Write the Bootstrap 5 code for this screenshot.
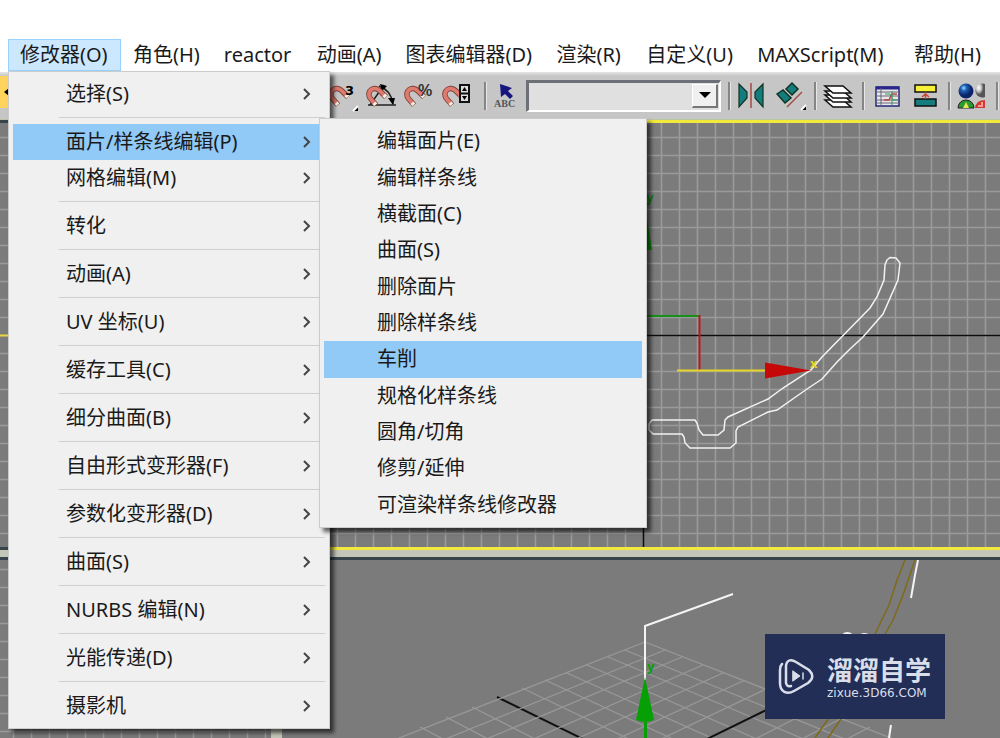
<!DOCTYPE html>
<html lang="zh-CN">
<head>
<meta charset="utf-8">
<meta name="viewport" content="width=device-width, initial-scale=1">
<title>修改器</title>
<link href="https://cdn.jsdelivr.net/npm/bootstrap@5.3.0/dist/css/bootstrap.min.css" rel="stylesheet">
<style>
  body { font-family: "Noto Sans", "Noto Sans CJK SC", sans-serif; font-size: 20px; line-height: 30px; color: #1a1a1a; background: #fff; }
  .app { min-height: 100vh; overflow: hidden; }
  .menubar { padding: 39px 7px 1px 8px; z-index: 10; }
  .menubar > .nav { display: grid; grid-template-columns: 113fr 91fr 93fr 88fr 151fr 90fr 111fr 157fr 91fr; }
  .menubar .nav-link { padding: 0 11px; line-height: 30px; color: #1a1a1a; border: 1px solid transparent; white-space: nowrap; }
  .menubar .nav-link.show { background: #cce8ff; border-color: #99d1ff; }

  .menu { border: 1px solid #ccc; border-radius: 0; background: #f0f0f0; box-shadow: 4px 4px 4px rgba(0,0,0,.6); padding: 4px; margin: 0; font-size: 20px; color: #1a1a1a; }
  .menu-main { width: 322px; top: 100%; left: 0; }
  .menu-sub { width: 328px; height: 410px; top: -6px; left: 306px; }
  .menu .dropdown-item { height: 36px; line-height: 36px; padding: 0 8px 0 53px; color: #1a1a1a; display: flex; align-items: center; justify-content: space-between; }
  .menu-main > li > .dropdown-item { width: 307px; }
  .menu-sub .dropdown-item { height: 100%; }
  .menu .dropdown-item.active { background: #91c9f7; }
  .menu .dropdown-divider { margin: 5px 0 6px 46px; border-top: 1px solid #d0d0d0; opacity: 1; }
  .chev { width: 10px; height: 14px; fill: none; stroke: #444; stroke-width: 2; }

  .toolbar { height: 48px; background: linear-gradient(#e4e4e4, #c6c6c6 4px); border-bottom: 1px solid #b9c6a4; }
  .tools-left { width: 328px; }
  .tool { width: 38px; height: 32px; padding: 0; border: 0; background: none; flex: none; }
  .tool svg { display: block; width: 38px; height: 32px; }
  .tool-on { background: #ffd45c; }
  .tool-abc { width: 36px; }
  .rule { width: 10px; height: 28px; flex: none; background: linear-gradient(90deg, transparent 4px, #858585 4px, #858585 6px, #e8e8e8 6px, #e8e8e8 7px, transparent 7px); }
  .rule:last-child { width: 8px; }
  .setbox { margin-right: 3px; }
  .setbox select { height: 32px; border-radius: 0; border: 2px solid #fff; border-top: 3px solid #6d7076; border-left: 3px solid #6d7076; background: #e0e0e0; padding: 0 30px 0 8px; font-size: 16px; }
  .setbox .drop { top: 4px; right: 3px; width: 26px; height: 24px; background: #f0f0f0; border: 1px solid #fff; border-right: 2px solid #777; border-bottom: 2px solid #777; pointer-events: none; }

  .views { display: grid; grid-template-columns: minmax(0, 271fr) minmax(0, 718fr); grid-template-rows: minmax(0, 430fr) minmax(0, 181fr); gap: 7px 11px; background: #c4c6b8; }
  .view { background: #7b7b7b; overflow: hidden; display: grid; }
  .view svg { display: block; width: 100%; height: 100%; min-height: 0; }
  .view-on { border: 3px solid #f1e93c; border-right: 0; }
  .view-low { border-top: 3px solid #38444c; }
  .glyph { font-size: 13px; font-weight: 700; }

  .logo { right: 55px; bottom: 19px; width: 180px; height: 85px; background: #222e56; color: #d9deea; padding: 0 13px; gap: 12px; }
  .logo-name { font-size: 26px; line-height: 32px; font-weight: 700; white-space: nowrap; }
  .logo-site { font-family: "DejaVu Sans", sans-serif; font-size: 12px; line-height: 14px; }
</style>
</head>
<body>
<div class="app d-flex flex-column">
  <nav class="menubar position-relative" aria-label="主菜单">
    <ul class="nav">
      <li class="nav-item dropdown"><a class="nav-link show" href="#" aria-expanded="true">修改器(O)</a>
        <ul class="dropdown-menu menu menu-main show">
          <li><a class="dropdown-item" href="#">选择(S)<svg class="chev"><path d="M2 2l5 5-5 5"/></svg></a></li>
          <li><hr class="dropdown-divider"></li>
          <li class="position-relative"><a class="dropdown-item active" href="#">面片/样条线编辑(P)<svg class="chev"><path d="M2 2l5 5-5 5"/></svg></a>
            <ul class="dropdown-menu menu menu-sub show d-flex flex-column">
              <li class="flex-fill"><a class="dropdown-item" href="#">编辑面片(E)</a></li>
              <li class="flex-fill"><a class="dropdown-item" href="#">编辑样条线</a></li>
              <li class="flex-fill"><a class="dropdown-item" href="#">横截面(C)</a></li>
              <li class="flex-fill"><a class="dropdown-item" href="#">曲面(S)</a></li>
              <li class="flex-fill"><a class="dropdown-item" href="#">删除面片</a></li>
              <li class="flex-fill"><a class="dropdown-item" href="#">删除样条线</a></li>
              <li class="flex-fill"><a class="dropdown-item active" href="#">车削</a></li>
              <li class="flex-fill"><a class="dropdown-item" href="#">规格化样条线</a></li>
              <li class="flex-fill"><a class="dropdown-item" href="#">圆角/切角</a></li>
              <li class="flex-fill"><a class="dropdown-item" href="#">修剪/延伸</a></li>
              <li class="flex-fill"><a class="dropdown-item" href="#">可渲染样条线修改器</a></li>
            </ul>
          </li>
          <li><a class="dropdown-item" href="#">网格编辑(M)<svg class="chev"><path d="M2 2l5 5-5 5"/></svg></a></li>
          <li><hr class="dropdown-divider"></li>
          <li><a class="dropdown-item" href="#">转化<svg class="chev"><path d="M2 2l5 5-5 5"/></svg></a></li>
          <li><hr class="dropdown-divider"></li>
          <li><a class="dropdown-item" href="#">动画(A)<svg class="chev"><path d="M2 2l5 5-5 5"/></svg></a></li>
          <li><hr class="dropdown-divider"></li>
          <li><a class="dropdown-item" href="#">UV 坐标(U)<svg class="chev"><path d="M2 2l5 5-5 5"/></svg></a></li>
          <li><hr class="dropdown-divider"></li>
          <li><a class="dropdown-item" href="#">缓存工具(C)<svg class="chev"><path d="M2 2l5 5-5 5"/></svg></a></li>
          <li><hr class="dropdown-divider"></li>
          <li><a class="dropdown-item" href="#">细分曲面(B)<svg class="chev"><path d="M2 2l5 5-5 5"/></svg></a></li>
          <li><hr class="dropdown-divider"></li>
          <li><a class="dropdown-item" href="#">自由形式变形器(F)<svg class="chev"><path d="M2 2l5 5-5 5"/></svg></a></li>
          <li><hr class="dropdown-divider"></li>
          <li><a class="dropdown-item" href="#">参数化变形器(D)<svg class="chev"><path d="M2 2l5 5-5 5"/></svg></a></li>
          <li><hr class="dropdown-divider"></li>
          <li><a class="dropdown-item" href="#">曲面(S)<svg class="chev"><path d="M2 2l5 5-5 5"/></svg></a></li>
          <li><hr class="dropdown-divider"></li>
          <li><a class="dropdown-item" href="#">NURBS 编辑(N)<svg class="chev"><path d="M2 2l5 5-5 5"/></svg></a></li>
          <li><hr class="dropdown-divider"></li>
          <li><a class="dropdown-item" href="#">光能传递(D)<svg class="chev"><path d="M2 2l5 5-5 5"/></svg></a></li>
          <li><hr class="dropdown-divider"></li>
          <li><a class="dropdown-item" href="#">摄影机<svg class="chev"><path d="M2 2l5 5-5 5"/></svg></a></li>
        </ul>
      </li>
      <li class="nav-item"><a class="nav-link" href="#">角色(H)</a></li>
      <li class="nav-item"><a class="nav-link" href="#">reactor</a></li>
      <li class="nav-item"><a class="nav-link" href="#">动画(A)</a></li>
      <li class="nav-item"><a class="nav-link" href="#">图表编辑器(D)</a></li>
      <li class="nav-item"><a class="nav-link" href="#">渲染(R)</a></li>
      <li class="nav-item"><a class="nav-link" href="#">自定义(U)</a></li>
      <li class="nav-item"><a class="nav-link" href="#">MAXScript(M)</a></li>
      <li class="nav-item"><a class="nav-link" href="#">帮助(H)</a></li>
    </ul>
  </nav>

  <svg width="0" height="0" class="position-absolute" aria-hidden="true">
    <defs>
      <g id="snap" fill="none">
        <path d="M10 25L4 18C0 11 8 5 14 11L20 17" stroke="#7c423b" stroke-width="5.500"/>
        <path d="M9.500 24.500L4 18C0 11 8 5 14 11L19.500 16.500" stroke="#df7b6e" stroke-width="3.800"/>
        <path d="M8 22.700l1.700 2M17.800 14.800l2 2" stroke="#f4eee4" stroke-width="4"/>
      </g>
      <pattern id="grid" x="641" y="333" width="18" height="18" patternUnits="userSpaceOnUse"><path d="M2.500 0V18M0 2.500H18" stroke="#9a9a9a" stroke-width="1.600" fill="none"/></pattern>
      <radialGradient id="ballBlue" cx=".35" cy=".3"><stop offset="0" stop-color="#9df"/><stop offset=".4" stop-color="#1d5fb4"/><stop offset="1" stop-color="#0c2468"/></radialGradient>
      <radialGradient id="ballGrey" cx=".35" cy=".3"><stop offset="0" stop-color="#fff"/><stop offset=".5" stop-color="#ccc"/><stop offset="1" stop-color="#555"/></radialGradient>
    </defs>
  </svg>

  <div class="toolbar d-flex align-items-center flex-shrink-0">
    <div class="tools-left flex-shrink-0"><button class="tool tool-on" aria-label="选择"><svg><path d="M4 16l5-4v8z"/></svg></button></div>
    <button class="tool" aria-label="捕捉"><svg><use href="#snap"/><text x="17" y="15" font-size="13" font-weight="700" font-family="DejaVu Sans">3</text><path d="M30 26v5h-5z"/><path d="M25 31l5-5" stroke="#fff" stroke-width="2"/></svg></button>
    <button class="tool" aria-label="角度捕捉"><svg><path d="M2 25H30M4 25L18 5M13 6Q25 10 27 24" fill="none" stroke="#222" stroke-width="1.500"/><path d="M14 4l7 2-5 5zM22 18h7l-2 7z"/><use href="#snap"/></svg></button>
    <button class="tool" aria-label="百分比捕捉"><svg><use href="#snap"/><text x="14" y="16" font-size="16" font-weight="700" font-family="Liberation Sans" fill="#333">%</text></svg></button>
    <button class="tool" aria-label="微调捕捉"><svg><use href="#snap"/><path d="M18 5h9v17H18zM18 13.500H27" fill="#ddd" stroke="#111" stroke-width="2"/><path d="M20 11l2.500-4 2.500 4zM20 16h5L22.500 20z"/></svg></button>
    <div class="rule"></div>
    <button class="tool tool-abc" aria-label="命名选择集"><svg><path d="M10 4l12 4-4 3 5 5-3 3-5-5-4 3z" fill="#16167e"/><text x="4" y="27" font-family="Liberation Serif" font-size="10" font-weight="700" fill="#555">ABC</text></svg></button>
    <div class="setbox position-relative flex-grow-1">
      <select class="form-select" aria-label="命名选择集列表"><option></option></select>
      <span class="drop position-absolute d-flex align-items-center justify-content-center"><svg width="12" height="6"><path d="M0 0h12L6 6z"/></svg></span>
    </div>
    <div class="rule"></div>
    <button class="tool" aria-label="镜像"><svg><path d="M5 4l8 8v6l-8 9zM29 4l-8 8v6l8 9z" fill="#147c7c" stroke="#132" stroke-width="1.200"/><path d="M17 3v25" stroke="#a34a42" stroke-width="1.500"/></svg></button>
    <button class="tool" aria-label="对齐"><svg><path d="M5 14l6-4 8 8-6 5zM14 9l6-6 6 6-6 6z" fill="#147c7c" stroke="#132" stroke-width="1.500"/><path d="M15 27L30 12" stroke="#a34a42" stroke-width="1.500"/><path d="M34 25v5h-5z"/><path d="M29 30l5-5" stroke="#fff" stroke-width="2"/></svg></button>
    <div class="rule"></div>
    <button class="tool" aria-label="层管理器"><svg fill="#fff" stroke="#111" stroke-width="1.500"><path d="M5 20h18l8 7H13z"/><path d="M5 15h18l8 7H13z"/><path d="M5 11h18l8 7H13z"/><path d="M5 6h18l8 7H13z"/></svg></button>
    <div class="rule"></div>
    <button class="tool" aria-label="曲线编辑器"><svg><path d="M8 7h23v19H8z" fill="#e8e8ec" stroke="#26267c" stroke-width="1.500"/><path d="M8 8h23" stroke="#26268c" stroke-width="3"/><path d="M13 8v18M8 12h23M8 16h23M8 20h23M8 23h23" stroke="#667" fill="none"/><path d="M16 20h5l3-6h5" stroke="#b44" stroke-width="1.500" fill="none"/><path d="M17 14h5l3 6h5M24 11v14" stroke="#395" fill="none"/></svg></button>
    <button class="tool" aria-label="图解视图"><svg><path d="M9 5h21v7H9z" fill="#f8f13a" stroke="#111" stroke-width="1.500"/><path d="M9 19h21v7H9z" fill="#147c7c" stroke="#111" stroke-width="1.500"/><path d="M19.500 12v7M16 17l3.500-3 3.500 3" fill="none" stroke="#c43" stroke-width="1.500"/></svg></button>
    <div class="rule"></div>
    <button class="tool" aria-label="材质编辑器"><svg><circle cx="12" cy="11" r="7.500" fill="url(#ballBlue)"/><path d="M31 4a7 7 0 1 0 0 13z" fill="url(#ballGrey)"/><path d="M4 28a8 8 0 0 1 16 0z" fill="#2a9a2c" stroke="#222"/><path d="M9 28l3-6 3 6z" fill="#eae45a"/><path d="M21 28q1-8 10-8v8z" fill="#d23a30"/><path d="M24 26h5M28 22v3" stroke="#fbb" stroke-width="1.500"/></svg></button>
    <div class="rule"></div>
  </div>

  <main class="views position-relative flex-grow-1">
    <section class="view" aria-label="顶视图">
      <svg viewBox="0 120 271 430" preserveAspectRatio="xMinYMin slice"><path fill="url(#grid)" d="M0 120h271v430H0z"/><path d="M0 335.500H271" stroke="#e8d83a" stroke-width="2"/><path d="M0 121.500H271M0 548.500H271" stroke="#38444c" stroke-width="3"/></svg>
    </section>
    <section class="view view-on" aria-label="前视图">
      <svg viewBox="285 123 715 424" preserveAspectRatio="xMinYMin slice" fill="none">
        <path fill="url(#grid)" d="M285 120h715v430H285z"/>
        <path d="M285 335.500H1000M643.500 120V550" stroke="#0c0c0c" stroke-width="1.600"/>
        <path d="M640 316H699" stroke="#169016" stroke-width="2"/>
        <path d="M699.500 315V370" stroke="#c01818" stroke-width="2"/>
        <path d="M677 370.500H767" stroke="#e6d428" stroke-width="2"/>
        <path d="M645 205l7 45h-14z" fill="#0a8c0a"/>
        <text class="glyph" x="646" y="202" fill="#0a8c0a">y</text>
        <path d="M887 260L890 257.500 896 258 900 263 898 280 883 314 863 337 850 349 837 362 822 379 807 389 777 410 768 412 738 427 736 431V443L730 448H690L685 443 684 437 682 434H653L649 430V424L652 420H695L697 423 699 430 703 435H718L724 430 725 420 728 417 768 399 783 388 811 370 822 357 870 308 877 297 884 280 885 265z" stroke="#f2f2f2" stroke-width="1.500"/>
        <path d="M765 362.500v16l46-8z" fill="#c60808"/>
        <text class="glyph" x="810" y="368" fill="#e6d428">x</text>
      </svg>
    </section>
    <section class="view view-low" aria-label="左视图">
      <svg viewBox="0 560 271 178" preserveAspectRatio="xMinYMin slice"><path fill="url(#grid)" d="M0 560h271v178H0z"/></svg>
    </section>
    <section class="view view-low" aria-label="透视视图">
      <svg viewBox="282 560 718 178" preserveAspectRatio="xMinYMin slice" fill="none">
        <g id="floor"><path d="M645 642L896 740M625 650L847 740M608 657L806 740M587 665L759 740M567 673L716 740M545 680L675 740M522 688L631 740M472 707L537 740M446 717L490 740M420 727L445 740" stroke="#989898" stroke-width="1.300"/><path d="M497 697L585 740" stroke="#111" stroke-width="2"/></g>
        <use href="#floor" transform="matrix(-1 0 0 1 1290 0)"/>
        <path d="M645 680V626L733 594M918 560L915 575 911 598M891 725L889 738" stroke="#f4f4f4" stroke-width="2"/>
        <path d="M905 560L897 580 889 605 875 634M915 560L903 595 893 620 885 634M828 719L815 738M841 719L828 738" stroke="#806a18" stroke-width="1.500"/>
        <path d="M843 635q4-4 9 0M861 635q3-2 7 0" stroke="#f4f4f4" stroke-width="2"/>
        <path d="M645 677l9 43q-9 4-18 0zM644 720h3v20h-3z" fill="#06a006"/>
        <text class="glyph" x="647" y="671" fill="#06a006">y</text>
      </svg>
    </section>
    <div class="logo position-absolute d-flex align-items-center">
      <svg width="37" height="37" viewBox="0 0 37 37" fill="none" stroke="#d9deea" stroke-width="2.500" stroke-linecap="round"><path d="M4 6Q2 8 2 12V25C2 34 9 37 16 33L30 25Q38 19 31 12L18 4C12 0 8 3 8 9V25Q9 29 13 28"/><path d="M15 13l7 5-7 5z" fill="#d9deea" stroke-width="1"/><path d="M25 15v6" stroke-width="1.500"/></svg>
      <div><div class="logo-name">溜溜自学</div><div class="logo-site">zixue.3D66.COM</div></div>
    </div>
  </main>
</div>
<script src="https://cdn.jsdelivr.net/npm/bootstrap@5.3.0/dist/js/bootstrap.bundle.min.js"></script>
</body>
</html>
